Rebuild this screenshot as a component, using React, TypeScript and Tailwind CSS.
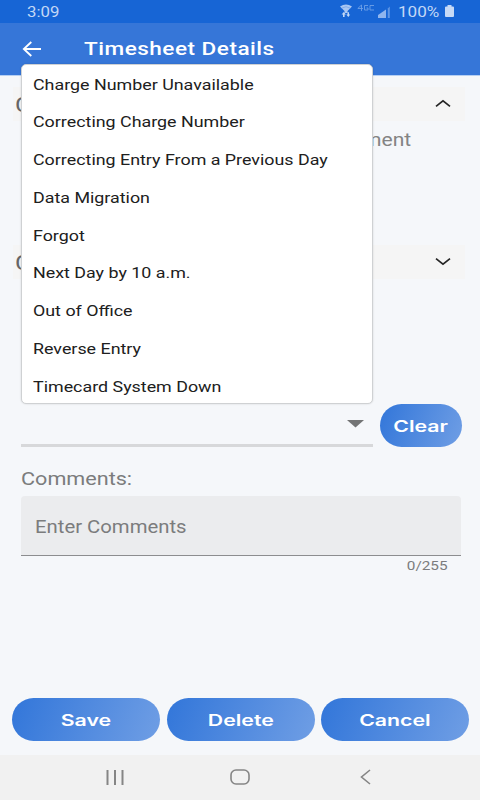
import type { ReactNode } from "react";

const reasons = [
  "Charge Number Unavailable",
  "Correcting Charge Number",
  "Correcting Entry From a Previous Day",
  "Data Migration",
  "Forgot",
  "Next Day by 10 a.m.",
  "Out of Office",
  "Reverse Entry",
  "Timecard System Down",
];

function StatusBar() {
  return (
    <div className="flex h-[23px] items-center bg-[#1765d5] pr-[26px] pl-[27px] text-[#c3d8f6]">
      <span className="origin-left scale-x-[1.2] pt-px text-[14px] leading-[23px]">3:09</span>
      <div className="ml-auto flex items-center">
        <svg width="12" height="13" viewBox="0 0 12 13" className="mr-[5px] mb-[2px]">
          <path d="M0 2.6 Q6 -1.8 12 2.6 L7.5 7 V9 H4.5 V7 Z" fill="#a9c6f2" />
          <path d="M1.6 4.2 Q6 1.2 10.4 4.2" stroke="#6799e4" strokeWidth=".6" fill="none" />
          <path d="M3.8 8 L1.6 10.5 H3 V13 H4.6 V10.5 H6 Z M8.3 13 L6.3 10.6 H7.5 V8.2 H9 V10.6 H10.2 Z" fill="#c3d8f6" />
        </svg>
        <svg width="18" height="8" viewBox="0 0 18 8" className="mr-[3px] mb-[7px]">
          <path d="M4.5 7 V1 L.8 4.5 H6 M11 1.5 H7.5 V6 H11 V4 H9.5 M17 1.5 H13 V6 H17" stroke="#6ea0e8" strokeWidth=".9" fill="none" />
        </svg>
        <svg width="12" height="12" viewBox="0 0 12 12" className="mr-[8px]">
          <path d="M0 9 L8 3.5 V12 H0 Z" fill="#8fb5ee" />
          <path d="M9.8 2.5 L11.8 .5 V12 H9.8 Z" fill="#5e96e6" />
        </svg>
        <span className="w-[41px] pt-px text-[14px] leading-[23px]">
          <span className="inline-block origin-left scale-x-[1.22]">100%</span>
        </span>
        <svg width="9" height="12" viewBox="0 0 9 12" className="mb-px ml-[6px]">
          <path d="M2.5 0 H6.5 V1.5 H8 Q9 1.5 9 2.5 V11 Q9 12 8 12 H1 Q0 12 0 11 V2.5 Q0 1.5 1 1.5 H2.5 Z" fill="#c7daf6" />
        </svg>
      </div>
    </div>
  );
}

function PanelHeader({ open }: { open: boolean }) {
  return (
    <div className="mr-[15px] ml-[13px] flex h-[34px] items-center justify-between bg-[#f5f5f5] pr-[14px] pl-[2px]">
      <span className="origin-left scale-x-[1.2] pt-[3px] text-[21px] text-[#666666]">C</span>
      <svg width="16" height="9" viewBox="0 0 16 9" className="mb-[2px]">
        <path d={open ? "M1 7.3 L8 1.8 L15 7.3" : "M1 1.7 L8 7.2 L15 1.7"} fill="none" stroke="#252525" strokeWidth="1.7" />
      </svg>
    </div>
  );
}

function PillButton({ className, children }: { className: string; children: ReactNode }) {
  return (
    <button
      className={`flex h-[43px] items-center justify-center rounded-[24px] bg-[linear-gradient(110deg,#3578da_5%,#6c9ce4_95%)] font-['Inter',sans-serif] text-[16px] font-semibold text-white ${className}`}
    >
      <span className="inline-block scale-x-[1.33] pt-px">{children}</span>
    </button>
  );
}

export default function App() {
  return (
    <div className="relative flex h-[800px] w-[480px] flex-col overflow-hidden bg-[#f5f7fa] font-['Roboto',sans-serif]">
      <StatusBar />
      <header className="flex h-[53px] items-center border-b border-[#b5cff3] bg-[#3676d8] pl-[22px] text-white">
        <svg width="20" height="16" viewBox="0 0 20 16">
          <path d="M19 8 H2 M9.3 1 L1.8 8 L9.3 15" fill="none" stroke="currentColor" strokeWidth="1.8" />
        </svg>
        <h1 className="ml-[42px] origin-left scale-x-[1.22] pt-[2px] text-[18.5px] font-medium tracking-[.4px]">Timesheet Details</h1>
      </header>

      <main className="flex flex-1 flex-col">
        <div className="mt-[11px]">
          <PanelHeader open />
        </div>
        <div className="flex h-[124px] justify-end pt-[5px] pr-[69px] text-[18px] text-[#848484]">
          <span className="origin-right scale-x-[1.17]">ment</span>
        </div>
        <PanelHeader open={false} />

        <div className="mt-[125px] flex pl-[21px]">
          <div className="flex h-[43px] w-[352px] justify-end border-b-[3px] border-[#d7d8da] pt-[16px] pr-[9px]">
            <svg width="17" height="8" viewBox="0 0 17 8">
              <path d="M0 0 H17 L8.5 7.5 Z" fill="#737475" />
            </svg>
          </div>
          <PillButton className="ml-[6.5px] w-[82px]">Clear</PillButton>
        </div>

        <label className="mt-[20px] ml-[21px] h-[24px] w-fit origin-left scale-x-[1.2] text-[18px] leading-[24px] text-[#7b7c7d]">
          Comments:
        </label>
        <div className="mr-[19px] ml-[21px] mt-[5px] flex h-[60px] items-center rounded-t-[4px] border-b border-[#8c8d8f] bg-[#ebecee] pt-[3px] pl-[14px] text-[17.5px] text-[#7b7c7d]">
          <span className="origin-left scale-x-[1.16]">Enter Comments</span>
        </div>
        <div className="flex justify-end pr-[32px] text-[13px] leading-[20px] text-[#7b7c7d]">
          <span className="origin-right scale-x-[1.18]">0/255</span>
        </div>

        <div className="mt-auto mb-[14px] flex gap-[6.5px] pl-[12px]">
          <PillButton className="w-[148px]">Save</PillButton>
          <PillButton className="w-[148px]">Delete</PillButton>
          <PillButton className="w-[148px]">Cancel</PillButton>
        </div>
      </main>

      <nav className="flex h-[45px] items-center bg-[#f1f1f1] text-[#858585]">
        <svg width="18" height="16" viewBox="0 0 18 16" className="ml-[106px]">
          <path d="M1.5 0 V15 M9 0 V15 M16.5 0 V15" stroke="currentColor" strokeWidth="2" />
        </svg>
        <svg width="20" height="16" viewBox="0 0 20 16" className="mb-px ml-[106px]">
          <rect x="1" y="1" width="18" height="14" rx="5" fill="none" stroke="currentColor" strokeWidth="1.6" />
        </svg>
        <svg width="11" height="16" viewBox="0 0 11 16" className="mb-px ml-[110px]">
          <path d="M10 1 L1.5 8 L10 15" fill="none" stroke="currentColor" strokeWidth="1.6" />
        </svg>
      </nav>

      <ul className="absolute top-[64px] left-[21px] h-[340px] w-[352px] rounded-[5px] border border-[#cfd1d3] bg-white pt-[.5px] pl-[11px] text-[15px] text-[#202020] shadow-[0_0_2px_rgba(0,0,0,0.15)]">
        {reasons.map((reason) => (
          <li key={reason} className="h-[37.8px] w-fit origin-left scale-x-[1.19] leading-[38px] whitespace-nowrap">
            {reason}
          </li>
        ))}
      </ul>
    </div>
  );
}
